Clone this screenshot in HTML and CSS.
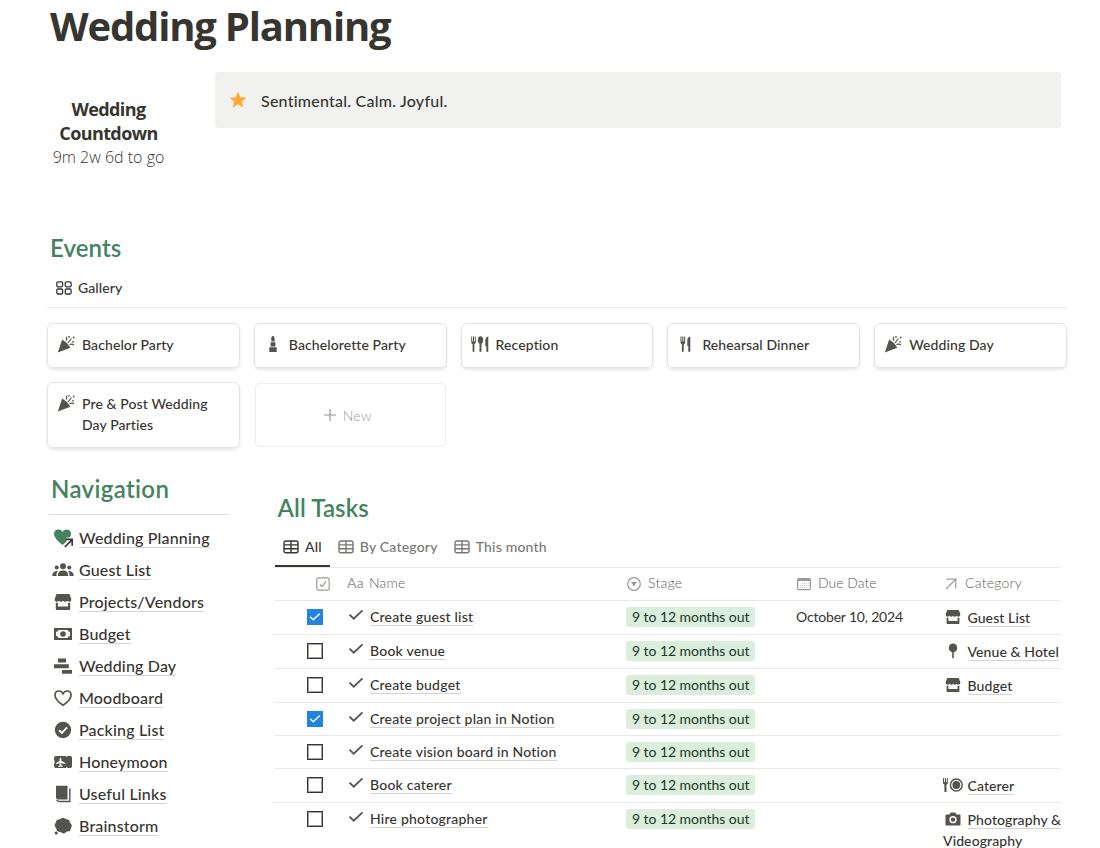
FILE: index.html
```html
<!DOCTYPE html>
<html lang="en">
<head>
	<meta charset="UTF-8">
	<title>Wedding Planning</title>
	<link rel="stylesheet" href="styles.css">
</head>
<body>
	<svg class="sprite">
		<symbol id="party" viewBox="0 0 18 18">
			<path d="M5.200 4.600L.8 17.400 13.400 12.800Q10.500 7.500 5.200 4.600z"/>
			<path d="M9 5.500q1.500-1.700.3-3.800M11 8q1.500-2 3.500-4.500M12.500 9.800q2.500-1.600 4.500.3" fill="none" stroke="currentColor" stroke-width="1.200"/>
			<circle cx="12" cy="1.800" r=".9"/><circle cx="16.700" cy="2.500" r=".9"/><circle cx="16" cy="6.800" r=".9"/>
		</symbol>
		<symbol id="lipstick" viewBox="0 0 18 18">
			<path d="M7.300 6.500V2.600Q8 1 9.300.8q1.300 1.200 1.300 3v2.700zM6.600 7.200h4.800v4.300H6.600zM5.300 12.200h7.400V17H5.300z"/>
		</symbol>
		<symbol id="fork-knife" viewBox="0 0 18 18">
			<path d="M3.500 1.500h1v5h.8v-5h1.100v5h.8v-5h1v5.600q0 1.600-1.500 2.300V16q0 1-.9 1T4.900 16V9.400Q3.500 8.700 3.500 7.100zM10.300 11V5.500q0-3.400 3-4V16q0 1-1 1t-1-1v-5z"/>
		</symbol>
		<symbol id="cutlery" viewBox="0 0 18 18">
			<path d="M.2 1.500h1v5h.8v-5h1v5h.8v-5h1v5.600q0 1.500-1.400 2.200V16q0 1-.9 1t-.9-1V9.300Q.2 8.600.2 7.100zM14.300 11V5.500q0-3.400 3-4V16q0 1-1 1t-1-1v-5z"/>
			<ellipse cx="9.500" cy="5" rx="2.700" ry="3.700"/><rect x="8.500" y="7.500" width="2" height="9.500" rx=".9"/>
		</symbol>
		<symbol id="gallery" viewBox="0 0 16 14">
			<g fill="none" stroke="currentColor" stroke-width="1.300"><rect x=".8" y=".8" width="5.800" height="5" rx="1.200"/><rect x="9.300" y=".8" width="5.800" height="5" rx="1.200"/><rect x=".8" y="8" width="5.800" height="5" rx="1.200"/><rect x="9.300" y="8" width="5.800" height="5" rx="1.200"/></g>
		</symbol>
		<symbol id="grid" viewBox="0 0 16 14">
			<path d="M3 1h10q2 0 2 2v7.700q0 2-2 2H3q-2 0-2-2V3q0-2 2-2zM1 4.900h14M1 8.800h14M8 1v11.500" fill="none" stroke="currentColor" stroke-width="1.400"/>
		</symbol>
		<symbol id="heart-link" viewBox="0 0 20 20">
			<path d="M9.500 17Q1 10.500 1 6.300 1 1.500 5.500 1.500q2.700 0 4 2.400 1.300-2.400 4-2.400Q18 1.500 18 6.300 18 10.500 9.500 17z" fill="#448361"/>
			<path d="M12 18.500l7-7M13.500 11.500h5.300v5.500" fill="none" stroke="#fff" stroke-width="4"/>
			<path d="M11.800 19l7.200-7.200M12.800 11.400h6.400v6.300" fill="none" stroke="#37352f" stroke-width="1.700"/>
		</symbol>
		<symbol id="people" viewBox="0 0 22 16">
			<circle cx="11" cy="4.300" r="3"/><circle cx="4.700" cy="5.500" r="2"/><circle cx="17.300" cy="5.500" r="2"/>
			<path d="M5.800 14q0-5.400 5.200-5.400t5.200 5.400zM.3 14q-.2-4.800 5.600-5.200Q4.400 10.600 4.400 14zM21.700 14q.2-4.800-5.600-5.200 1.500 1.800 1.500 5.200z"/>
		</symbol>
		<symbol id="store" viewBox="0 0 18 18">
			<path d="M2.500 1h13l1.800 5q.2 2.700-2.200 2.700-1.500 0-2-1-.7 1-2.100 1t-2-1q-.7 1-2 1t-2.100-1q-.5 1-2 1Q.5 8.700.7 6z"/>
			<path d="M1.800 9.800h2.100v3.700h10.200V9.800h2.100V16q0 1-1 1H2.800q-1 0-1-1z"/>
		</symbol>
		<symbol id="money" viewBox="0 0 18 14">
			<path fill-rule="evenodd" d="M0 1h18v12H0zM4.300 3Q4.300 4.700 2 4.900v4.200q2.300.2 2.300 1.900h9.400q0-1.700 2.300-1.900V4.900Q13.700 4.700 13.700 3zM9 4.200a2.800 2.800 0 1 1 0 5.600 2.800 2.800 0 0 1 0-5.600z"/>
		</symbol>
		<symbol id="timeline" viewBox="0 0 18 16"><path d="M4 .5h8v4H4zM0 6.300h14.800v4H0zM8 12h10v3.700H8z"/></symbol>
		<symbol id="heart" viewBox="0 0 18 18"><path d="M9 16.300Q1 10.800 1 6.200 1 2 4.800 2 7.700 2 9 4.700 10.300 2 13.200 2 17 2 17 6.200q0 4.600-8 10.100z" fill="none" stroke="currentColor" stroke-width="1.700"/></symbol>
		<symbol id="badge" viewBox="0 0 18 18">
			<circle cx="9" cy="9" r="8.200"/><path d="M5 9.300l2.800 2.700 5.400-5.600" fill="none" stroke="#fff" stroke-width="1.900"/>
		</symbol>
		<symbol id="ticket" viewBox="0 0 18 14">
			<path d="M2 1h10l.8 1.300L13.600 1h2.900Q18 1 18 3v8q0 2-1.500 2h-2.900l-.8-1.300L12 13H2q-2 0-2-2V9q1.500-2 0-4V3q0-2 2-2z"/>
			<path d="M6.500 2.500q.8 0 .8 1.500v1.800l4 2.300v1.200L7.300 8v2.200l1.500 1v.8l-2.300-.6-2.300.6v-.8l1.500-1V8L2.200 9.300V8.100l3.500-2.300V4q0-1.500.8-1.500z" fill="#fff"/>
		</symbol>
		<symbol id="book" viewBox="0 0 18 18">
			<path d="M2 .8h11.500v13.700H4.500Q2 14.500 2 12z"/><path d="M15.800 3.500v13H5.500q-2.200 0-3-1.700" fill="none" stroke="currentColor" stroke-width="1.400"/>
		</symbol>
		<symbol id="thought" viewBox="0 0 18 18">
			<path d="M6 2.200Q9-.8 12.300 2.200q3.700 0 3.700 3.500 3.200 2.800.8 5.500.2 3.800-4.200 3.300-2.800 3.500-6 .5-4.300.3-4.300-3.800-3-2.700-.5-5.500Q1.800 2.400 6 2.200z"/><circle cx="2.200" cy="16" r="1.600"/>
		</symbol>
		<symbol id="check" viewBox="0 0 16 12"><path d="M1.500 5.700l4.200 4L14.500 1.300" fill="none" stroke="currentColor" stroke-width="1.800"/></symbol>
		<symbol id="checkbox" viewBox="0 0 14 14"><rect x=".8" y=".8" width="12.400" height="12.400" rx="1.500" fill="none" stroke="currentColor" stroke-width="1.200"/><path d="M4 7.300l2 2.200L10 4.300" fill="none" stroke="currentColor" stroke-width="1.200"/></symbol>
		<symbol id="select" viewBox="0 0 14 14"><circle cx="7" cy="7" r="6.300" fill="none" stroke="currentColor" stroke-width="1.200"/><path d="M4 5h6L7 9.600z"/></symbol>
		<symbol id="calendar" viewBox="0 0 14 14"><path d="M.5 2.500Q.5 1 2 1h10q1.500 0 1.500 1.500V4H.5z"/><rect x=".7" y="1.500" width="12.600" height="11.200" rx="1.500" fill="none" stroke="currentColor" stroke-width="1.200"/><path d="M5 6.500h6.500M3 8.500h8.500M3 10.500h6" stroke="currentColor" stroke-dasharray="1 1" opacity=".6"/></symbol>
		<symbol id="arrow" viewBox="0 0 12 12"><path d="M1 11L10.500 1.500M1.500 1.200h9.300v9.300" fill="none" stroke="currentColor" stroke-width="1.200"/></symbol>
		<symbol id="pin" viewBox="0 0 18 18"><circle cx="9" cy="5.500" r="4.800"/><path d="M8.100 9h1.800v7L9 17.500 8.100 16z"/></symbol>
		<symbol id="plate" viewBox="0 0 20 16">
			<path d="M0 1h1v4h.9V1h1v4h.9V1h1v5Q4.800 7.300 3.500 7.800V15H1.400V7.800Q0 7.300 0 6z"/>
			<circle cx="13.300" cy="8" r="5.900" fill="none" stroke="currentColor" stroke-width="1.500"/><circle cx="13.300" cy="8" r="3.900"/>
		</symbol>
		<symbol id="camera" viewBox="0 0 16 14">
			<path d="M1.500 2.500h3L5.700.5h4.600l1.200 2h3q1 0 1 1v9q0 1-1 1h-13q-1 0-1-1v-9q0-1 1-1z"/><circle cx="8" cy="7.700" r="2.900" fill="none" stroke="#fff" stroke-width="1.500"/>
		</symbol>
		<symbol id="plus" viewBox="0 0 12 12"><path d="M6 0v12M0 6h12" stroke="currentColor" stroke-width="1.200"/></symbol>
		<symbol id="star" viewBox="0 0 16 16"><path d="M8 .5l2.100 5.100 5.600.4-4.300 3.500 1.400 5.500L8 12l-4.800 3 1.400-5.500L.3 6l5.600-.4z" stroke="currentColor" stroke-width=".6" stroke-linejoin="round"/></symbol>
	</svg>

	<h1 class="title">Wedding Planning</h1>

	<div class="intro">
		<div class="countdown">
			<strong>Wedding<br>Countdown</strong>
			<span>9m 2w 6d to go</span>
		</div>
		<div class="callout"><svg class="star"><use href="#star"/></svg>Sentimental. Calm. Joyful.</div>
	</div>

	<section class="events">
		<h2>Events</h2>
		<div class="gallery-tab"><svg><use href="#gallery"/></svg>Gallery</div>
		<div class="cards">
			<div class="card"><svg><use href="#party"/></svg><span>Bachelor Party</span></div>
			<div class="card"><svg><use href="#lipstick"/></svg><span>Bachelorette Party</span></div>
			<div class="card"><svg><use href="#cutlery"/></svg><span>Reception</span></div>
			<div class="card"><svg><use href="#fork-knife"/></svg><span>Rehearsal Dinner</span></div>
			<div class="card"><svg><use href="#party"/></svg><span>Wedding Day</span></div>
			<div class="card"><svg><use href="#party"/></svg><span>Pre &amp; Post Wedding Day Parties</span></div>
			<div class="card-new"><svg><use href="#plus"/></svg>New</div>
		</div>
	</section>

	<div class="columns">
		<nav class="navigation">
			<h2>Navigation</h2>
			<ul>
				<li><svg class="linked"><use href="#heart-link"/></svg><a>Wedding Planning</a></li>
				<li><svg class="wide"><use href="#people"/></svg><a>Guest List</a></li>
				<li><svg><use href="#store"/></svg><a>Projects/Vendors</a></li>
				<li><svg><use href="#money"/></svg><a>Budget</a></li>
				<li><svg><use href="#timeline"/></svg><a>Wedding Day</a></li>
				<li><svg><use href="#heart"/></svg><a>Moodboard</a></li>
				<li><svg><use href="#badge"/></svg><a>Packing List</a></li>
				<li><svg><use href="#ticket"/></svg><a>Honeymoon</a></li>
				<li><svg><use href="#book"/></svg><a>Useful Links</a></li>
				<li><svg><use href="#thought"/></svg><a>Brainstorm</a></li>
			</ul>
		</nav>

		<section class="tasks">
			<h2>All Tasks</h2>
			<div class="tabs">
				<div class="tab active"><svg><use href="#grid"/></svg>All</div>
				<div class="tab"><svg><use href="#grid"/></svg>By Category</div>
				<div class="tab"><svg><use href="#grid"/></svg>This month</div>
			</div>
			<div class="row head">
				<div class="done"><svg><use href="#checkbox"/></svg></div>
				<div class="name"><span class="aa">Aa</span>Name</div>
				<div class="stage"><svg><use href="#select"/></svg>Stage</div>
				<div class="due"><svg><use href="#calendar"/></svg>Due Date</div>
				<div class="category"><svg class="arrow"><use href="#arrow"/></svg>Category</div>
			</div>
			<div class="row">
				<div class="done"><span class="box checked"><svg><use href="#check"/></svg></span></div>
				<div class="name"><svg><use href="#check"/></svg><a>Create guest list</a></div>
				<div class="stage"><span class="tag">9 to 12 months out</span></div>
				<div class="due">October 10, 2024</div>
				<div class="category"><svg><use href="#store"/></svg><a>Guest List</a></div>
			</div>
			<div class="row">
				<div class="done"><span class="box"></span></div>
				<div class="name"><svg><use href="#check"/></svg><a>Book venue</a></div>
				<div class="stage"><span class="tag">9 to 12 months out</span></div>
				<div class="due"></div>
				<div class="category"><svg><use href="#pin"/></svg><a>Venue &amp; Hotel</a></div>
			</div>
			<div class="row">
				<div class="done"><span class="box"></span></div>
				<div class="name"><svg><use href="#check"/></svg><a>Create budget</a></div>
				<div class="stage"><span class="tag">9 to 12 months out</span></div>
				<div class="due"></div>
				<div class="category"><svg><use href="#store"/></svg><a>Budget</a></div>
			</div>
			<div class="row short">
				<div class="done"><span class="box checked"><svg><use href="#check"/></svg></span></div>
				<div class="name"><svg><use href="#check"/></svg><a>Create project plan in Notion</a></div>
				<div class="stage"><span class="tag">9 to 12 months out</span></div>
				<div class="due"></div>
				<div class="category"></div>
			</div>
			<div class="row short">
				<div class="done"><span class="box"></span></div>
				<div class="name"><svg><use href="#check"/></svg><a>Create vision board in Notion</a></div>
				<div class="stage"><span class="tag">9 to 12 months out</span></div>
				<div class="due"></div>
				<div class="category"></div>
			</div>
			<div class="row">
				<div class="done"><span class="box"></span></div>
				<div class="name"><svg><use href="#check"/></svg><a>Book caterer</a></div>
				<div class="stage"><span class="tag">9 to 12 months out</span></div>
				<div class="due"></div>
				<div class="category"><svg class="wide"><use href="#plate"/></svg><a>Caterer</a></div>
			</div>
			<div class="row last">
				<div class="done"><span class="box"></span></div>
				<div class="name"><svg><use href="#check"/></svg><a>Hire photographer</a></div>
				<div class="stage"><span class="tag">9 to 12 months out</span></div>
				<div class="due"></div>
				<div class="category"><svg><use href="#camera"/></svg><a>Photography &amp; Videography</a></div>
			</div>
		</section>
	</div>
</body>
</html>
```
FILE: styles.css
```css
* {
	box-sizing: border-box;
}
body {
	margin: 0;
	padding: 2px 33px 0 47px;
	height: 848px;
	overflow: hidden;
	background-color: #fff;
	color: #37352f;
	font-family: Lato, "Liberation Sans", sans-serif;
	font-size: 14px;
	font-weight: 500;
	font-variant-ligatures: none;
	letter-spacing: .1px;
}
svg {
	flex: none;
	fill: currentColor;
}
.sprite {
	display: none;
}
h1, h2, ul {
	margin: 0;
	padding: 0;
}
h2 {
	color: #448361;
	font-size: 24px;
	font-weight: 600;
	line-height: 32px;
}
.title {
	padding-left: 3px;
	font: bold 40px/48px "Open Sans", "Noto Sans", sans-serif;
	letter-spacing: -1.2px;
}
.intro {
	display: flex;
	height: 160px;
	padding: 22px 6px 0 4px;
}
.countdown {
	width: 115px;
	margin-right: 49px;
	padding-top: 25px;
	font: 300 16px/24px "Open Sans", "Noto Sans", sans-serif;
	letter-spacing: 0;
	text-align: center;
	white-space: nowrap;
}
.countdown strong {
	display: block;
	font-size: 18px;
	font-weight: 700;
	letter-spacing: -.6px;
}
.callout {
	display: flex;
	flex: 1;
	align-items: center;
	height: 56px;
	padding: 0 15px;
	background-color: #f1f1ef;
	border-radius: 4px;
	font-size: 16px;
	letter-spacing: .23px;
}
.callout .star {
	width: 16px;
	height: 16px;
	margin: 0 15px 0 0;
	color: #ffa931;
}

.events {
	padding-top: 22px;
}
.events h2 {
	padding-left: 3px;
}
.gallery-tab {
	display: flex;
	align-items: center;
	height: 44px;
	margin-right: 1px;
	padding: 4px 9px 0;
	border-bottom: 1px solid #e9e9e7;
}
.gallery-tab svg {
	width: 16px;
	height: 14px;
	margin: 1px 6px 0 0;
}
.cards {
	display: grid;
	grid-template-columns: repeat(5, 1fr);
	gap: 14px;
	padding-top: 15px;
}
.card {
	display: flex;
	padding: 10px 10px 12px;
	border: 1px solid #e3e3e2;
	border-radius: 6px;
	box-shadow: 0 2px 3px rgba(15, 15, 15, .1);
	line-height: 21px;
}
.card svg {
	width: 18px;
	height: 18px;
	margin: 1px 7px 0 -1px;
	color: #55534e;
}
.card-new {
	display: flex;
	align-items: center;
	justify-content: center;
	margin: 1px;
	padding-right: 5px;
	border: 1px solid #ededec;
	border-radius: 5px;
	color: #9b9a97;
	font-weight: 300;
	letter-spacing: .2px;
}
.card-new svg {
	width: 12px;
	height: 12px;
	margin-right: 7px;
}

.columns {
	display: flex;
	padding: 25px 6px 0 2px;
}
.navigation {
	width: 180px;
	margin-right: 45px;
	font-size: 16px;
	letter-spacing: .17px;
}
.navigation h2 {
	height: 42px;
	padding-left: 2px;
	border-bottom: 1px solid #dddcda;
	letter-spacing: .35px;
}
.navigation ul {
	padding-top: 7px;
	list-style: none;
}
.navigation li {
	display: flex;
	align-items: center;
	height: 32px;
	padding-left: 5px;
}
.navigation svg {
	width: 18px;
	height: 18px;
	margin-right: 7px;
	color: #55534e;
}
.navigation .wide {
	width: 22px;
	margin: 0 5px 0 -2px;
}
.navigation .linked {
	width: 20px;
	height: 20px;
	margin: 0 6px 0 -1px;
}
a {
	border-bottom: 1px solid #d5d4d1;
}

.tasks {
	flex: 1;
	min-width: 0;
	padding-top: 19px;
}
.tasks h2 {
	padding-left: 3.5px;
}
.tabs {
	display: flex;
	height: 44px;
	margin-left: 1px;
	border-bottom: 1px solid #e9e9e7;
	letter-spacing: .2px;
}
.tab {
	display: flex;
	align-items: center;
	height: 44px;
	padding: 1px 8px 0;
	color: #787774;
}
.tab.active {
	height: 43px;
	border-bottom: 2px solid #37352f;
	padding-top: 4px;
	color: #37352f;
}
.tab svg {
	width: 16px;
	height: 14px;
	margin-right: 6px;
}
.row {
	display: grid;
	grid-template-columns: 74px 278px 170px 147px 118px;
	height: 34px;
	border-bottom: 1px solid #e9e9e7;
	line-height: 20px;
}
.row.short {
	height: 33px;
}
.row.last {
	height: 60px;
	border: 0;
}
.row > div {
	padding-top: 6px;
	white-space: nowrap;
}
.row .done {
	padding: 8px 0 0 33px;
}
.box {
	display: block;
	width: 16px;
	height: 16px;
	border: 1px solid #37352f;
	box-shadow: inset 0 0 0 1px #a3a29f;
}
.box.checked {
	border: 0;
	background-color: #2383e2;
	box-shadow: none;
	color: #fff;
}
.box svg {
	display: block;
	width: 12px;
	height: 16px;
	margin: 0 auto;
}
.row .name svg {
	width: 16px;
	height: 12px;
	margin-right: 6px;
	color: #55534e;
	vertical-align: 1px;
}
.row .name {
	letter-spacing: .22px;
}
.stage {
	font-weight: 400;
}
.tag {
	display: block;
	width: 129px;
	height: 20px;
	padding: 0 6px;
	background-color: #dbeddb;
	border-radius: 3px;
	color: #1c3829;
	letter-spacing: -.06px;
}
.due {
	font-weight: 400;
	letter-spacing: -.18px;
}
/* a little wider than its column so "Photography &" stays on one line */
.row .category {
	margin-right: -4px;
	padding-top: 6px;
	white-space: normal;
	line-height: 21px;
}
.category svg {
	width: 16px;
	height: 16px;
	margin: 0 6.5px 0 2px;
	color: #55534e;
	vertical-align: -2px;
}
.category .wide {
	width: 20px;
	margin: 0 4.5px 0 0;
}
.row.head {
	height: 33px;
	color: #5f5e5b;
}
.row.head > div {
	padding-top: 5px;
	font-weight: 300;
	letter-spacing: .25px;
	line-height: 20px;
}
.row.head .due {
	letter-spacing: 0;
}
.head svg {
	width: 14px;
	height: 14px;
	margin: 0 7px 0 1px;
	color: #9b9a97;
	vertical-align: -3px;
}
.row.head .done {
	padding: 5px 0 0 41px;
}
.head .category .arrow {
	width: 12px;
	height: 12px;
	margin: 0 8px 0 2px;
	color: #9b9a97;
	vertical-align: -2px;
}
.aa {
	margin: 0 5px 0 -1px;
	font-size: 14px;
	font-weight: 400;
	color: #9b9a97;
}
```
